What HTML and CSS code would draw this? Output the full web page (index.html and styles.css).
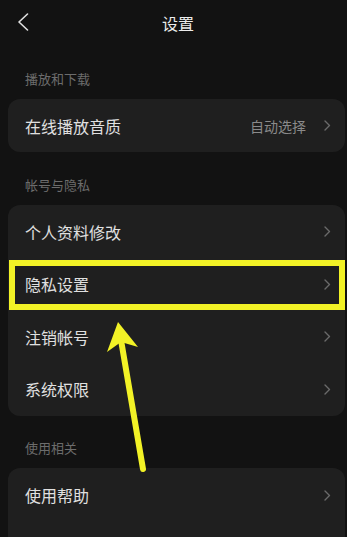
FILE: index.html
```html
<!DOCTYPE html>
<html lang="zh">
<head>
<meta charset="utf-8">
<title>设置</title>
<link rel="stylesheet" href="styles.css">
</head>
<body>
<div class="page">
  <header class="topbar">
    <svg class="back" width="12" height="18" viewBox="0 0 12 18"><path d="M10.5 1 L2 9 L10.5 17" fill="none" stroke="#e0e0e0" stroke-width="1.6" stroke-linecap="round" stroke-linejoin="round"/></svg>
    <div class="title">设置</div>
  </header>

  <section class="group">
    <div class="label">播放和下载</div>
    <div class="card">
      <div class="row"><span class="name">在线播放音质</span><span class="value">自动选择</span><svg class="chev" width="7" height="11" viewBox="0 0 7 11"><path d="M1 1 L5.5 5.5 L1 10" fill="none" stroke="#6a6a6a" stroke-width="1.4" stroke-linecap="round" stroke-linejoin="round"/></svg></div>
    </div>
  </section>

  <section class="group">
    <div class="label">帐号与隐私</div>
    <div class="card">
      <div class="row"><span class="name">个人资料修改</span><svg class="chev" width="7" height="11" viewBox="0 0 7 11"><path d="M1 1 L5.5 5.5 L1 10" fill="none" stroke="#6a6a6a" stroke-width="1.4" stroke-linecap="round" stroke-linejoin="round"/></svg></div>
      <div class="row highlighted"><span class="name">隐私设置</span><svg class="chev" width="7" height="11" viewBox="0 0 7 11"><path d="M1 1 L5.5 5.5 L1 10" fill="none" stroke="#6a6a6a" stroke-width="1.4" stroke-linecap="round" stroke-linejoin="round"/></svg><div class="mark"></div></div>
      <div class="row"><span class="name">注销帐号</span><svg class="chev" width="7" height="11" viewBox="0 0 7 11"><path d="M1 1 L5.5 5.5 L1 10" fill="none" stroke="#6a6a6a" stroke-width="1.4" stroke-linecap="round" stroke-linejoin="round"/></svg></div>
      <div class="row"><span class="name">系统权限</span><svg class="chev" width="7" height="11" viewBox="0 0 7 11"><path d="M1 1 L5.5 5.5 L1 10" fill="none" stroke="#6a6a6a" stroke-width="1.4" stroke-linecap="round" stroke-linejoin="round"/></svg></div>
    </div>
  </section>

  <section class="group">
    <div class="label">使用相关</div>
    <div class="card last">
      <div class="row"><span class="name">使用帮助</span><svg class="chev" width="7" height="11" viewBox="0 0 7 11"><path d="M1 1 L5.5 5.5 L1 10" fill="none" stroke="#6a6a6a" stroke-width="1.4" stroke-linecap="round" stroke-linejoin="round"/></svg></div>
      <div class="row"></div>
    </div>
  </section>

  <svg class="arrow" width="347" height="537" viewBox="0 0 347 537">
    <line x1="143" y1="469" x2="121" y2="340" stroke="#f2f226" stroke-width="6" stroke-linecap="round"/>
    <polygon points="118,322 107,352 121,342 138,347" fill="#f2f226"/>
  </svg>
</div>
</body>
</html>
```

FILE: styles.css
```css
* { box-sizing: border-box; }
html, body {
  margin: 0;
  padding: 0;
  background: #121212;
}
body {
  font-family: "Noto Sans CJK SC", "Noto Sans", sans-serif;
  color: #e2e2e2;
  width: 347px;
  height: 537px;
  overflow: hidden;
}
.page {
  position: relative;
  width: 347px;
  height: 537px;
  overflow: hidden;
}
.topbar {
  position: relative;
  height: 46px;
  display: flex;
  align-items: center;
  justify-content: center;
}
.back {
  position: absolute;
  left: 17px;
  top: 13px;
}
.title {
  font-size: 16px;
  line-height: 20px;
  color: #ececec;
  margin-left: 9px;
}
.group {
  padding-top: 22.5px;
}
.label {
  height: 20px;
  line-height: 20px;
  font-size: 13px;
  color: #6c6c6c;
  padding-left: 25px;
  margin-bottom: 10px;
}
.card {
  margin: 0 2px 0 8px;
  background: #1f1f1f;
  border-radius: 12px;
  padding-top: 1px;
}
.card.last {
  border-radius: 12px 12px 0 0;
}
.row {
  position: relative;
  height: 52.5px;
  display: flex;
  align-items: center;
  padding: 0 14px 0 17px;
}
.name {
  flex: 1;
  font-size: 16px;
  line-height: 20px;
  color: #e0e0e0;
}
.value {
  font-size: 14px;
  line-height: 20px;
  color: #8a8a8a;
  margin-right: 18px;
}
.chev {
  flex: none;
}
.mark {
  position: absolute;
  left: 1px;
  right: 0;
  top: 2px;
  bottom: 1px;
  border: 6px solid #f2f226;
  pointer-events: none;
}
.arrow {
  position: absolute;
  left: 0;
  top: 0;
  pointer-events: none;
}
```
